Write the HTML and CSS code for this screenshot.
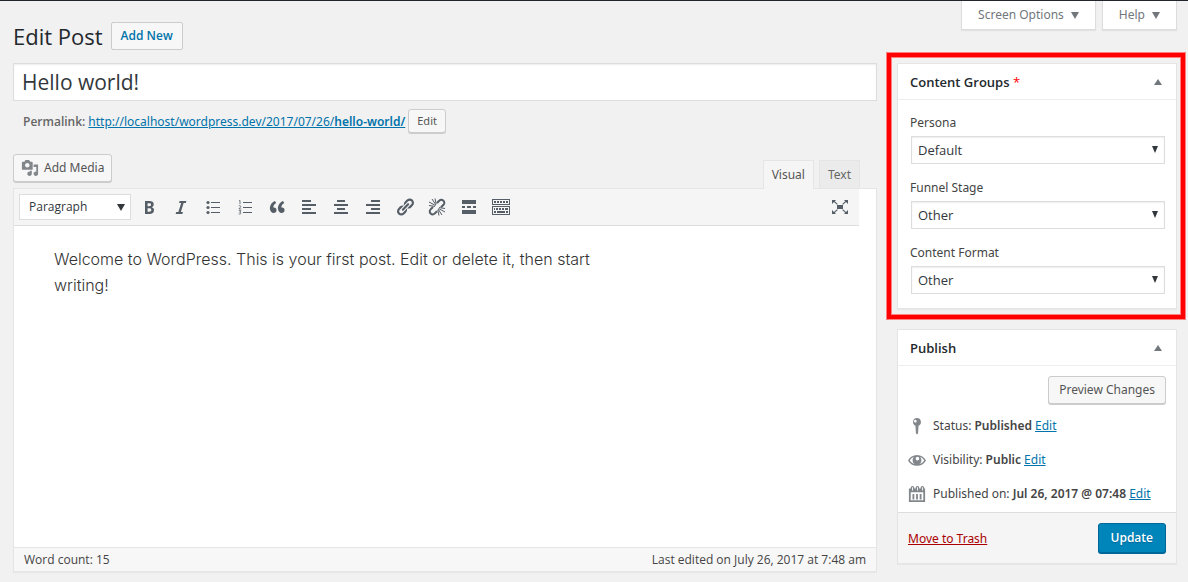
FILE: index.html
```html
<!DOCTYPE html>
<html lang="en">
<head>
<meta charset="utf-8">
<title>Edit Post</title>
<link rel="stylesheet" href="styles.css">
</head>
<body>
<div class="page">
  <header class="page-header">
    <div class="heading">
      <h1 class="page-title">Edit Post</h1>
      <a class="title-action" href="#">Add New</a>
    </div>
    <div class="screen-tabs">
      <button class="screen-tab" type="button">Screen Options <svg class="tri" viewBox="0 0 8 7"><path d="M0 0h8L4 7z"/></svg></button>
      <button class="screen-tab" type="button">Help <svg class="tri" viewBox="0 0 8 7"><path d="M0 0h8L4 7z"/></svg></button>
    </div>
  </header>

  <div class="columns">
    <main class="main">
      <input class="post-title" type="text" value="Hello world!" aria-label="Post title">
      <div class="permalink">
        <strong class="permalink-label">Permalink:</strong>
        <a class="link" href="#">http://localhost/wordpress.dev/2017/07/26/<b>hello-world/</b></a>
        <button class="btn btn-small" type="button">Edit</button>
      </div>

      <div class="editor-tools">
        <button class="btn btn-media" type="button">
          <svg class="media-icon" viewBox="0 0 20 20"><path d="M13 11V4c0-.55-.45-1-1-1h-1.67L9 1H5L3.67 3H2c-.55 0-1 .45-1 1v7c0 .55.45 1 1 1h10c.55 0 1-.45 1-1zM7 4.5c1.38 0 2.5 1.12 2.5 2.5S8.38 9.5 7 9.5 4.5 8.38 4.5 7 5.62 4.5 7 4.5zM14 6h5v10.5c0 1.38-1.12 2.5-2.5 2.5S14 17.88 14 16.5s1.12-2.5 2.5-2.5c.17 0 .34.02.5.05V9h-3V6zm-4 8.05V13h2v3.5c0 1.38-1.12 2.5-2.5 2.5S7 17.88 7 16.5 8.12 14 9.5 14c.17 0 .34.02.5.05z"/></svg>
          Add Media
        </button>
        <div class="editor-tabs">
          <button class="editor-tab active" type="button">Visual</button>
          <button class="editor-tab" type="button">Text</button>
        </div>
      </div>

      <section class="editor">
        <div class="toolbar">
          <span class="select-wrap format">
            <select class="select" aria-label="Format"><option>Paragraph</option></select>
            <svg class="select-arrow" viewBox="0 0 8 7"><path d="M0 0h8L4 7z"/></svg>
          </span>
          <button class="tool" type="button" aria-label="Bold"><svg class="icon" viewBox="0 0 20 20"><path d="M6 4v13h4.54c1.37 0 2.46-.33 3.26-1 .8-.66 1.2-1.58 1.2-2.77 0-.84-.17-1.51-.51-2.01s-.9-.85-1.67-1.03v-.09c.57-.1 1.02-.4 1.36-.9s.51-1.13.51-1.91c0-1.14-.39-1.98-1.17-2.5C12.75 4.26 11.5 4 9.78 4H6zm2.57 5.15V6.26h1.36c.73 0 1.27.11 1.61.32.34.22.51.58.51 1.07 0 .54-.16.92-.47 1.15s-.82.35-1.51.35h-1.5zm0 2.19h1.6c1.44 0 2.16.53 2.16 1.61 0 .6-.17 1.05-.51 1.34s-.86.43-1.57.43H8.57v-3.38z"/></svg></button>
          <button class="tool" type="button" aria-label="Italic"><svg class="icon" viewBox="0 0 20 20"><path d="M14.78 6h-2.13l-2.8 9h2.12l-.62 2H4.6l.62-2h2.14l2.8-9H8.03l.62-2h6.75z"/></svg></button>
          <button class="tool" type="button" aria-label="Bulleted list"><svg class="icon" viewBox="0 0 20 20"><circle cx="5" cy="5.500" r="1.600"/><circle cx="5" cy="10.500" r="1.600"/><circle cx="5" cy="15.500" r="1.600"/><path d="M8 5h9v1H8zM8 10h9v1H8zM8 15h9v1H8z"/></svg></button>
          <button class="tool" type="button" aria-label="Numbered list"><svg class="icon" viewBox="0 0 20 20"><path d="M8 5h9v1H8zM8 10h9v1H8zM8 15h9v1H8z"/><path class="line thin" d="M4 4l1-.6v3.800M3.800 9c1.500-1 2.600.2 1.500 1.300L3.900 12h2.400M3.800 13.700H6l-1.300 1.600c2 0 1.600 2.200-1 1.600"/></svg></button>
          <button class="tool" type="button" aria-label="Blockquote"><svg class="icon" viewBox="0 0 20 20"><path d="M9.490 13.220c0-.74-.2-1.380-.61-1.900-.62-.78-1.830-.88-2.530-.72-.29-1.650 1.110-3.750 2.920-4.650L7.880 4c-2.730 1.300-5.420 4.280-4.960 8.050C3.210 14.430 4.590 16 6.540 16c.85 0 1.560-.25 2.120-.75s.83-1.180.83-2.030zm8.050 0c0-.74-.2-1.380-.61-1.900-.63-.78-1.830-.88-2.530-.72-.29-1.650 1.110-3.750 2.920-4.650L15.930 4c-2.730 1.300-5.410 4.280-4.950 8.050.29 2.380 1.660 3.950 3.610 3.950.85 0 1.560-.25 2.120-.75s.83-1.180.83-2.030z"/></svg></button>
          <button class="tool" type="button" aria-label="Align left"><svg class="icon" viewBox="0 0 20 20"><path d="M3 3h9v2H3zM3 7h14v2H3zM3 11h9v2H3zM3 15h14v2H3z"/></svg></button>
          <button class="tool" type="button" aria-label="Align center"><svg class="icon" viewBox="0 0 20 20"><path d="M6 3h8v2H6zM3 7h14v2H3zM6 11h8v2H6zM3 15h14v2H3z"/></svg></button>
          <button class="tool" type="button" aria-label="Align right"><svg class="icon" viewBox="0 0 20 20"><path d="M8 3h9v2H8zM3 7h14v2H3zM8 11h9v2H8zM3 15h14v2H3z"/></svg></button>
          <button class="tool" type="button" aria-label="Insert link"><svg class="icon" viewBox="0 0 20 20"><path d="M17.740 2.760c1.680 1.690 1.680 4.410 0 6.100l-1.530 1.520c-1.120 1.120-2.700 1.470-4.140 1.090l2.620-2.610.76-.77.76-.76c.84-.84.84-2.200 0-3.040-.84-.85-2.200-.85-3.040 0l-.77.76-3.380 3.380c-.37-1.440-.02-3.020 1.100-4.140l1.520-1.530c1.690-1.680 4.420-1.680 6.100 0zM8.590 13.430l5.340-5.340c.42-.42.42-1.100 0-1.520-.44-.43-1.130-.39-1.530 0l-5.330 5.340c-.42.42-.42 1.100 0 1.520.44.43 1.130.39 1.520 0zm-.76 2.290l4.140-4.150c.38 1.440.03 3.020-1.090 4.140l-1.520 1.530c-1.690 1.680-4.410 1.680-6.100 0-1.680-1.680-1.680-4.420 0-6.100l1.530-1.520c1.120-1.120 2.700-1.470 4.140-1.100l-4.140 4.150c-.85.84-.85 2.200 0 3.050.84.84 2.200.84 3.040 0z"/></svg></button>
          <button class="tool" type="button" aria-label="Remove link"><svg class="icon" viewBox="0 0 20 20"><path class="line thick" d="M10 6l2.200-2.200c2.800-2.800 7 1.200 4.300 4L14 10.300M6 10l-2.400 2.400c-2.700 2.800 1.400 6.800 4.200 4L10 14.200"/><path class="line" d="M8.500 8.500L2 5M9 8L5 2M9.200 7L8 1.500M8 9.400L2 8.500M11.500 11.500L18 15M11 12l4 6M10.800 13l1.200 5.500M12 10.600l6 .9"/></svg></button>
          <button class="tool" type="button" aria-label="Read more tag"><svg class="icon" viewBox="0 0 20 20"><path d="M3 3h14v4H3zM3 9h3v2H3zM8 9h4v2H8zM14 9h3v2h-3zM3 13h14v4H3z"/></svg></button>
          <button class="tool" type="button" aria-label="Toolbar toggle"><svg class="icon" viewBox="0 0 20 20"><path fill-rule="evenodd" d="M1 2h18v6H1zM2 3v4h16V3zM1 9h18v9H1zM2 10v7h16v-7z"/><path d="M3 4h2v2H3zM6 4h2v2H6zM9 4h2v2H9zM12 4h2v2h-2zM15 4h2v2h-2zM3 11h1v2H3zM5 11h2v2H5zM8 11h2v2H8zM11 11h2v2h-2zM14 11h3v2h-3zM3 14h2v2H3zM6 14h8v2H6zM15 14h2v2h-2z"/></svg></button>
          <button class="tool tool-end" type="button" aria-label="Distraction-free writing"><svg class="icon" viewBox="0 0 20 20"><path d="M7 8h6v4H7zM2 3h4L4.800 4.200l3 2.800-.8.800-3-2.800L2 7zM18 3v4l-2-2-3 2.800-.8-.8 3-2.800L14 3zM2 17v-4l2 2 3-2.800.8.800-3 2.800L6 17zM18 17h-4l1.200-1.200-3-2.800.8-.8 3 2.800 2-2z"/></svg></button>
        </div>
        <div class="content" contenteditable="true" spellcheck="false"><p class="paragraph">Welcome to WordPress. This is your first post. Edit or delete it, then start writing!</p></div>
        <footer class="status-bar"><span>Word count: 15</span><span>Last edited on July 26, 2017 at 7:48 am</span></footer>
      </section>
    </main>

    <aside class="side">
      <section class="box highlighted">
        <header class="box-header"><h2 class="box-title">Content Groups <span class="required">*</span></h2><svg class="toggle" viewBox="0 0 8 6"><path d="M4 0l4 6H0z"/></svg></header>
        <div class="fields">
          <div class="field">
            <label class="label" for="persona">Persona</label>
            <span class="select-wrap"><select class="select" id="persona"><option>Default</option></select><svg class="select-arrow" viewBox="0 0 8 7"><path d="M1 0h6L4 7z"/></svg></span>
          </div>
          <div class="field">
            <label class="label" for="stage">Funnel Stage</label>
            <span class="select-wrap"><select class="select" id="stage"><option>Other</option></select><svg class="select-arrow" viewBox="0 0 8 7"><path d="M1 0h6L4 7z"/></svg></span>
          </div>
          <div class="field">
            <label class="label" for="format">Content Format</label>
            <span class="select-wrap"><select class="select" id="format"><option>Other</option></select><svg class="select-arrow" viewBox="0 0 8 7"><path d="M1 0h6L4 7z"/></svg></span>
          </div>
        </div>
      </section>

      <section class="box">
        <header class="box-header"><h2 class="box-title">Publish</h2><svg class="toggle" viewBox="0 0 8 6"><path d="M4 0l4 6H0z"/></svg></header>
        <div class="preview"><button class="btn" type="button">Preview Changes</button></div>
        <ul class="details">
          <li class="detail"><svg class="detail-icon" viewBox="0 0 20 20"><path fill-rule="evenodd" d="M10 1a4.500 4.500 0 0 1 1.700 8.600L11.200 18 10 19.500 8.800 18l-.5-8.400A4.500 4.500 0 0 1 10 1zM8.800 3.300a1.500 1.500 0 1 0 0 2.700 1.500 1.500 0 0 0 0-2.700z"/></svg><span>Status: <b>Published</b> <a class="link" href="#">Edit</a></span></li>
          <li class="detail"><svg class="detail-icon" viewBox="0 0 20 20"><path fill-rule="evenodd" d="M0 10.500C2 7 5.500 4.500 10 4.500s8 2.500 10 6c-2 3.500-5.500 6-10 6s-8-2.500-10-6zM2 10.500c1.200 2 3 3.400 5.300 4A5 5 0 0 1 6.500 6.800C4.600 7.500 3.100 8.800 2 10.500zM18 10.500c-1.100-1.700-2.600-3-4.500-3.700a5 5 0 0 1-.8 7.700c2.300-.6 4.100-2 5.300-4zM10.500 6.500a2 2 0 1 0 0 4 2 2 0 0 0 0-4z"/></svg><span>Visibility: <b>Public</b> <a class="link" href="#">Edit</a></span></li>
          <li class="detail"><svg class="detail-icon" viewBox="0 0 20 20"><path fill-rule="evenodd" d="M1 4h2V3a2 2 0 0 1 4 0v1h1.500V3a2 2 0 0 1 4 0v1H14V3a2 2 0 0 1 4 0v1h1v15H1zM3 8v9h14V8zM4.500 2.500V6h1V2.500zM10 2.500V6h1V2.500zM15.500 2.500V6h1V2.500z"/><path d="M5 10h2v6H5zM9 10h2v6H9zM13 10h2v6h-2z"/></svg><span>Published on: <b>Jul 26, 2017 @ 07:48</b> <a class="link" href="#">Edit</a></span></li>
        </ul>
        <footer class="actions"><a class="link trash" href="#">Move to Trash</a><button class="btn btn-primary" type="button">Update</button></footer>
      </section>
    </aside>
  </div>
</div>
</body>
</html>
```
FILE: styles.css
```css
*, *::before, *::after { box-sizing: border-box; }
body {
  margin: 0;
  background: #f1f1f1;
  color: #444;
  font: 12px/18px "Noto Sans", "Open Sans", sans-serif;
}
button, input, select { font: inherit; color: inherit; }
button { cursor: pointer; }
b, strong { font-weight: 600; }
svg { display: block; flex: none; fill: currentColor; }
.page { border-top: 1px solid #23252e; padding: 0 11px 11px 13px; }
.page-header { display: flex; justify-content: space-between; height: 62px; }
.heading { display: flex; align-items: center; gap: 8px; padding-bottom: 14px; padding-top: 21px; }
.page-title { margin: 0; color: #23282d; font: 400 22px/28px "Open Sans", sans-serif; }
.title-action {
  padding: 4px 9px;
  border: 1px solid #ccc;
  border-radius: 2px;
  background: #f7f7f7;
  color: #0073aa;
  font-family: "Open Sans", sans-serif;
  font-weight: 600;
  text-decoration: none;
}
.screen-tabs { display: flex; align-items: flex-start; gap: 6px; }
.screen-tab {
  display: flex;
  align-items: center;
  gap: 7px;
  height: 29px;
  padding: 0 16px;
  border: 1px solid #ddd;
  border-top: 0;
  background: #fff;
  box-shadow: 0 1px 1px rgba(0, 0, 0, .06);
  color: #72777c;
}
.tri { width: 8px; height: 7px; }

.columns { display: grid; grid-template-columns: minmax(0, 1fr) 280px; gap: 20px; align-items: start; }
.post-title {
  display: block;
  width: 100%;
  height: 38px;
  padding: 0 8px;
  border: 1px solid #ddd;
  background: #fff;
  box-shadow: inset 0 1px 2px rgba(0, 0, 0, .07);
  color: #32373c;
  font: 400 21px/28px "Open Sans", sans-serif;
}
.permalink { display: flex; align-items: center; gap: 3px; padding: 8px 10px 0; }
.permalink-label { color: #666; font-family: "Open Sans", sans-serif; }
.link { color: #0073aa; text-decoration: underline; }
.btn {
  height: 28px;
  margin-bottom: 1px;
  padding: 0 10px;
  border: 1px solid #ccc;
  border-radius: 3px;
  background: #f7f7f7;
  box-shadow: 0 1px 0 #ccc;
  color: #555;
}
.btn-small { height: 24px; padding: 0 8px; font-size: 11px; line-height: 16px; }
.editor-tools { display: flex; justify-content: space-between; align-items: flex-end; padding: 20px 17px 0 0; }
.btn-media { display: flex; align-items: center; gap: 5px; margin-bottom: 6px; padding: 0 7px; }
.media-icon { width: 18px; height: 18px; color: #82878c; }
.editor-tabs { display: flex; gap: 5px; }
.editor-tab {
  height: 28px;
  padding: 0 8px;
  border: 1px solid #e5e5e5;
  border-bottom: 0;
  background: #ebebeb;
  color: #666;
}
.editor-tab.active { position: relative; height: 29px; margin-bottom: -1px; background: #f5f5f5; color: #555; }

.editor { border: 1px solid #e5e5e5; background: #fff; box-shadow: 0 1px 1px rgba(0, 0, 0, .04); }
.toolbar {
  display: flex;
  align-items: center;
  gap: 4px;
  height: 37px;
  margin-right: 17px;
  padding: 0 5px;
  border-bottom: 1px solid #ddd;
  background: #f5f5f5;
  color: #555d66;
}
.tool { display: grid; place-items: center; width: 28px; height: 28px; padding: 0; border: 0; background: none; }
.tool-end { margin-left: auto; }
.icon { width: 20px; height: 20px; }
.line { fill: none; stroke: currentColor; stroke-width: 1; }
.thin { stroke-width: .8; }
.thick { stroke-width: 2; }
.content { min-height: 321px; padding: 20px 40px; outline: 0; color: #333; font: 300 16px/26px Inter, sans-serif; }
.paragraph { max-width: 580px; margin: 0; }
.status-bar {
  display: flex;
  justify-content: space-between;
  padding: 3px 10px 2px;
  border-top: 1px solid #e5e5e5;
  background: #f7f7f7;
  font-family: "Open Sans", sans-serif;
}

.select-wrap { position: relative; display: block; color: #32373c; }
.select {
  display: block;
  appearance: none;
  width: 100%;
  height: 28px;
  padding: 0 6px;
  border: 1px solid #ddd;
  border-radius: 0;
  background: #fff;
  box-shadow: inset 0 1px 2px rgba(0, 0, 0, .07);
  font: 400 13px/18px "Open Sans", sans-serif;
}
.select-arrow { position: absolute; right: 6px; top: 10px; width: 8px; height: 7px; pointer-events: none; }
.format { width: 112px; }
.format .select { height: 26px; padding: 0 9px; box-shadow: none; font-size: 12px; }

.side { display: grid; gap: 20px; }
.box { border: 1px solid #e5e5e5; background: #fff; box-shadow: 0 1px 1px rgba(0, 0, 0, .04); }
.box-header {
  display: flex;
  align-items: center;
  justify-content: space-between;
  height: 36px;
  padding: 0 14px 0 12px;
  border-bottom: 1px solid #eee;
}
.box-title { margin: 0; color: #23282d; font: 600 13px/18px "Open Sans", sans-serif; }
.required { color: #f00; font-weight: 400; }
.toggle { width: 8px; height: 6px; color: #72777c; }
.highlighted { position: relative; }
.highlighted::after {
  content: "";
  position: absolute;
  inset: -11px -9px -11px -11px;
  border: 4px solid #f00;
  box-shadow: 0 0 0 1px #ff8080, inset 0 0 0 1px #ff8080;
  pointer-events: none;
}
.fields { display: grid; gap: 13px; padding: 12px 11px 14px 13px; }
.field { display: grid; gap: 3px; }
.label { line-height: 21px; margin-left: -1px; }
.preview { display: flex; justify-content: flex-end; padding: 10px 10px 4px; }
.details { display: grid; margin: 0; padding: 0 10px 1px; list-style: none; }
.detail { display: flex; align-items: center; gap: 7px; height: 34px; white-space: nowrap; }
.detail-icon { width: 18px; height: 18px; color: #82878c; }
.actions {
  display: flex;
  align-items: center;
  justify-content: space-between;
  padding: 10px 10px 9px;
  border-top: 1px solid #ddd;
  background: #f5f5f5;
}
.trash { color: #a00; }
.btn-primary {
  height: 30px;
  padding: 0 12px;
  border-color: #006799;
  background: #0085ba;
  box-shadow: 0 1px 0 #006799;
  color: #fff;
  font-family: "Open Sans", sans-serif;
  font-weight: 600;
  text-shadow: 0 1px 1px #006799;
}
```
